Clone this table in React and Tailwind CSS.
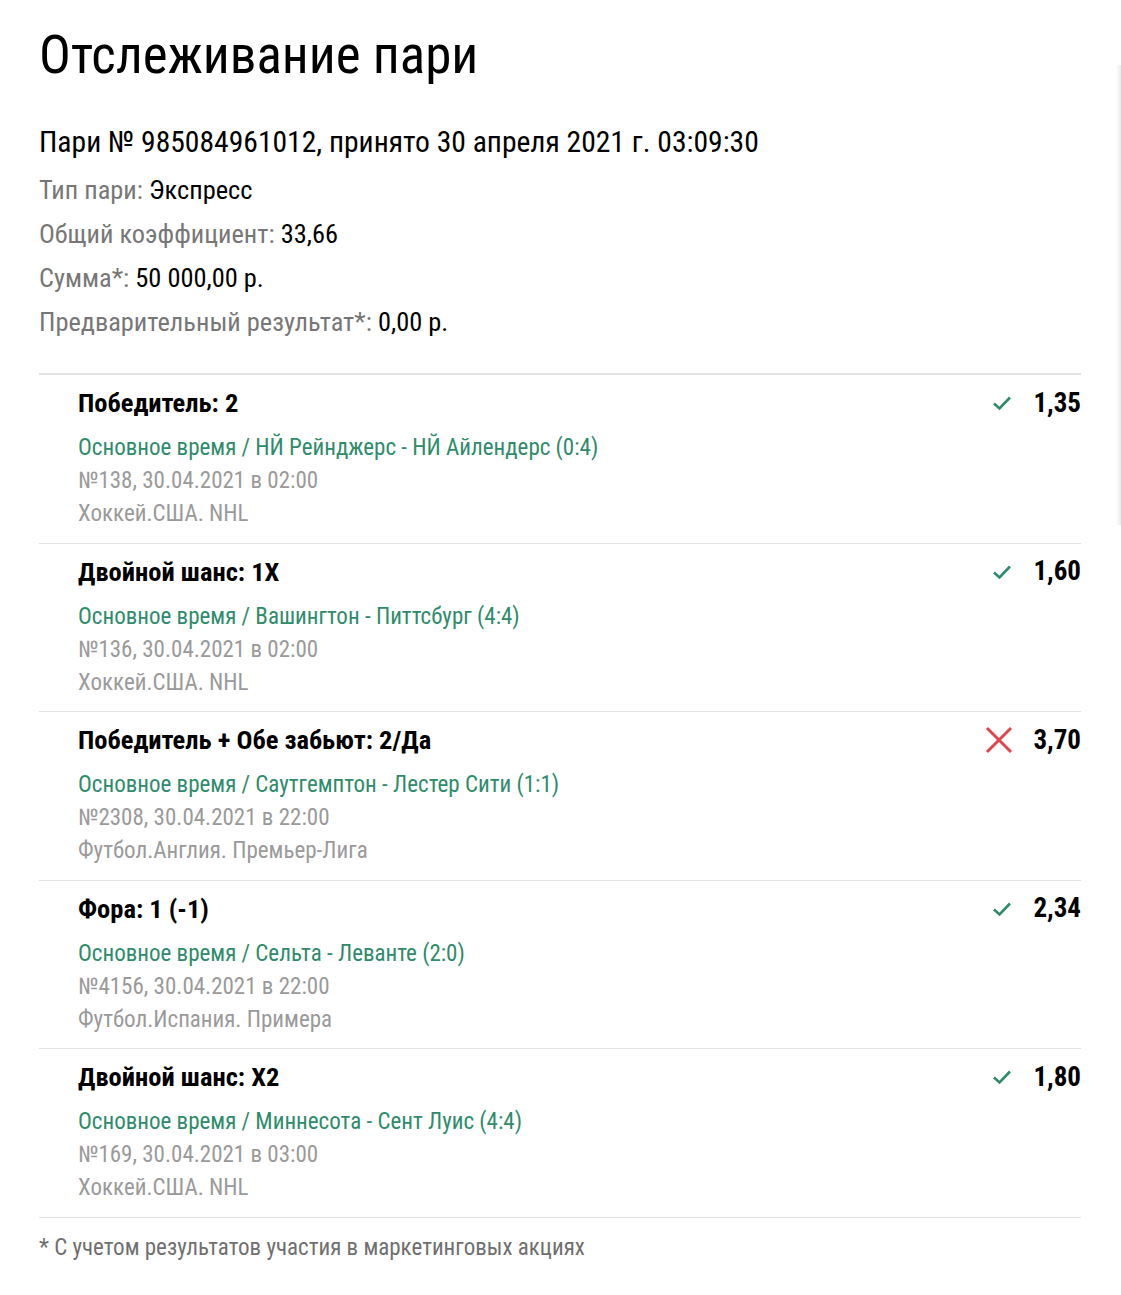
const bets = [
  {
    title: 'Победитель: 2',
    event: 'Основное время / НЙ Рейнджерс - НЙ Айлендерс (0:4)',
    meta: '№138, 30.04.2021 в 02:00',
    league: 'Хоккей.США. NHL',
    won: true,
    odds: '1,35',
  },
  {
    title: 'Двойной шанс: 1X',
    event: 'Основное время / Вашингтон - Питтсбург (4:4)',
    meta: '№136, 30.04.2021 в 02:00',
    league: 'Хоккей.США. NHL',
    won: true,
    odds: '1,60',
  },
  {
    title: 'Победитель + Обе забьют: 2/Да',
    event: 'Основное время / Саутгемптон - Лестер Сити (1:1)',
    meta: '№2308, 30.04.2021 в 22:00',
    league: 'Футбол.Англия. Премьер-Лига',
    won: false,
    odds: '3,70',
  },
  {
    title: 'Фора: 1 (-1)',
    event: 'Основное время / Сельта - Леванте (2:0)',
    meta: '№4156, 30.04.2021 в 22:00',
    league: 'Футбол.Испания. Примера',
    won: true,
    odds: '2,34',
  },
  {
    title: 'Двойной шанс: X2',
    event: 'Основное время / Миннесота - Сент Луис (4:4)',
    meta: '№169, 30.04.2021 в 03:00',
    league: 'Хоккей.США. NHL',
    won: true,
    odds: '1,80',
  },
];

const CheckIcon = () => (
  <svg width="20" height="16" viewBox="0 0 20 16" fill="none">
    <path d="M2 8.5l5.5 5L18 2.5" stroke="#2e8b6b" strokeWidth="2.6" />
  </svg>
);

const CrossIcon = () => (
  <svg width="28" height="28" viewBox="0 0 28 28" fill="none">
    <path d="M2 2l24 24M26 2L2 26" stroke="#e0454b" strokeWidth="3" />
  </svg>
);

const BetRow = ({ bet }) => (
  <div className="flex border-b border-[#e3e3e3] pl-[39px] pt-[12px] pb-[12.5px]">
    <div className="flex-1">
      <div className="text-[26.5px] font-bold leading-[32px] text-black">{bet.title}</div>
      <div className="mt-[12px] text-[23px] leading-[33px] text-[#2e8b6b]">{bet.event}</div>
      <div className="text-[23px] leading-[33px] text-[#9a9a9a]">{bet.meta}</div>
      <div className="text-[23px] leading-[33px] text-[#9a9a9a]">{bet.league}</div>
    </div>
    <div className="flex h-[32px] items-center gap-[20px]">
      <div className={bet.won ? 'flex w-[28px] justify-center pl-[6px]' : 'flex w-[28px] justify-center'}>
        {bet.won ? <CheckIcon /> : <CrossIcon />}
      </div>
      <span className="text-[27px] font-bold text-black">{bet.odds}</span>
    </div>
  </div>
);

export default function App() {
  return (
    <div
      className="relative min-h-[1295px] bg-white"
      style={{ fontFamily: '"Roboto Condensed", Roboto, "Liberation Sans", sans-serif' }}
    >
      <div className="absolute right-0 top-[65px] h-[460px] w-[5px] bg-gradient-to-r from-white to-[#ececec]" />
      <div className="w-[1081px] pl-[39px] pt-[23px]">
        <h1 className="text-[53px] leading-[64px] text-black">Отслеживание пари</h1>
        <div className="mt-[35px] text-[29.6px] leading-[40px] text-black">
          Пари № 985084961012, принято 30 апреля 2021 г. 03:09:30
        </div>
        <div className="mt-[6px] text-[26.4px] leading-[44px]">
          <div>
            <span className="text-[#777]">Тип пари: </span>
            <span className="text-black">Экспресс</span>
          </div>
          <div>
            <span className="text-[#777]">Общий коэффициент: </span>
            <span className="text-black">33,66</span>
          </div>
          <div>
            <span className="text-[#777]">Сумма*: </span>
            <span className="text-black">50 000,00 р.</span>
          </div>
          <div>
            <span className="text-[#777]">Предварительный результат*: </span>
            <span className="text-black">0,00 р.</span>
          </div>
        </div>
        <div className="mt-[29px] border-t-2 border-[#e3e3e3]">
          {bets.map((bet) => (
            <BetRow key={bet.meta} bet={bet} />
          ))}
        </div>
        <div className="mt-[14px] text-[23px] leading-[32px] text-[#6f6f6f]">
          * С учетом результатов участия в маркетинговых акциях
        </div>
      </div>
    </div>
  );
}
